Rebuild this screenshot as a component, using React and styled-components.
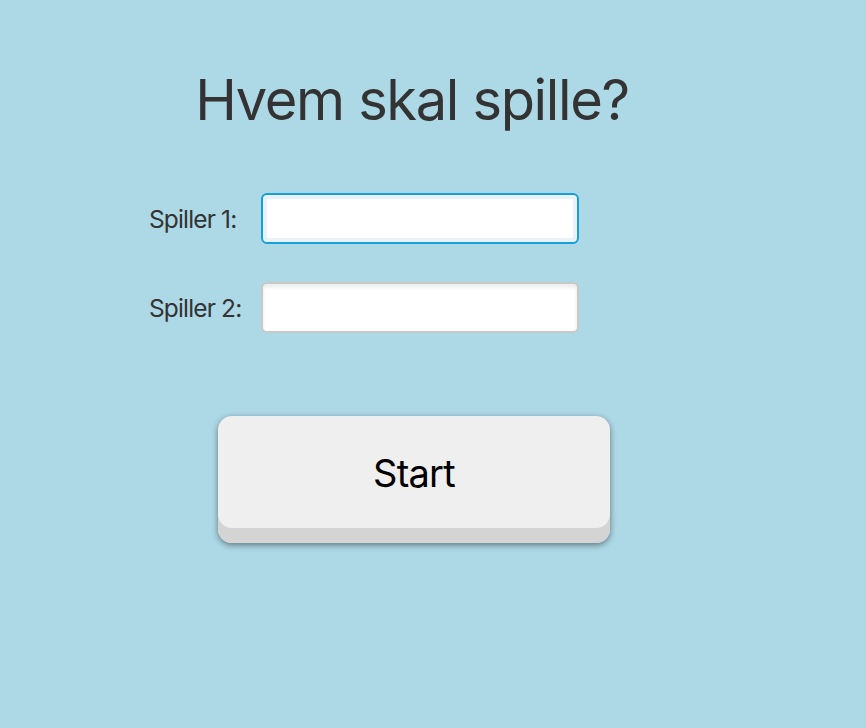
import styled, { createGlobalStyle } from "styled-components";

const GlobalStyle = createGlobalStyle`
  html, body {
    margin: 0;
    padding: 0;
    background-color: #add8e6;
    font-family: Inter, "Noto Sans", sans-serif;
    color: #333;
  }
`;

const Pagina = styled.div`
  width: 828px;
  min-height: 728px;
  display: flex;
  flex-direction: column;
  align-items: center;
`;

const Tittel = styled.h1`
  margin: 66px 4px 0 0;
  font-size: 56px;
  font-weight: 400;
  letter-spacing: -0.024em;
  color: #333;
`;

const Skjema = styled.div`
  align-self: flex-start;
  margin: 59px 0 0 149px;
  display: flex;
  flex-direction: column;
  gap: 38px;
`;

const Rad = styled.label`
  display: flex;
  align-items: center;
`;

const Etikett = styled.span`
  width: 112px;
  font-size: 24.5px;
  letter-spacing: -0.035em;
  color: #333;
`;

const Felt = styled.input`
  box-sizing: border-box;
  width: 318px;
  height: 51px;
  padding: 0 14px;
  font-family: Inter, sans-serif;
  font-size: 22px;
  color: #333;
  caret-color: #333;
  border: 2px solid #c8c8c8;
  border-radius: 6px;
  background: #fff;
  box-shadow: inset 0 3px 4px rgba(0, 0, 0, 0.08);
  outline: none;

  &:focus {
    border-color: #15a0d8;
    box-shadow: inset 0 0 0 4px #e8f2f8;
  }
`;

const StartKnapp = styled.button`
  margin-top: 83px;
  width: 392px;
  height: 127px;
  padding-bottom: 15px;
  border: none;
  border-radius: 14px;
  background-color: #efefef;
  font-family: Inter, sans-serif;
  font-size: 38px;
  letter-spacing: -0.02em;
  color: #000;
  cursor: pointer;
  box-shadow: inset 0 -15px 0 #d4d4d4, 0 2px 6px rgba(0, 0, 0, 0.45);
`;

function App() {
  return (
    <>
      <GlobalStyle />
      <Pagina>
        <Tittel>Hvem skal spille?</Tittel>
        <Skjema>
          <Rad>
            <Etikett>Spiller 1:</Etikett>
            <Felt type="text" autoFocus />
          </Rad>
          <Rad>
            <Etikett>Spiller 2:</Etikett>
            <Felt type="text" />
          </Rad>
        </Skjema>
        <StartKnapp>Start</StartKnapp>
      </Pagina>
    </>
  );
}

export default App;
